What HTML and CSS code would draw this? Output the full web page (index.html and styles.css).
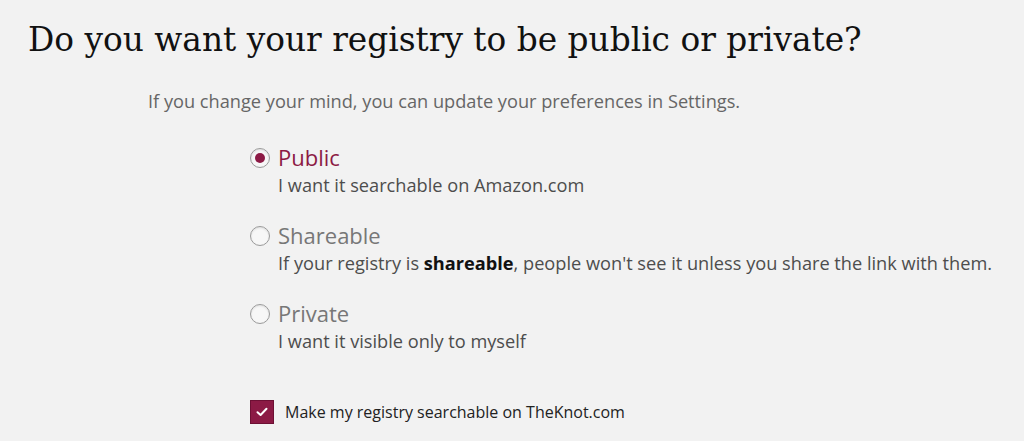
FILE: index.html
```html
<!DOCTYPE html>
<html lang="en">
<head>
    <meta charset="UTF-8">
    <title>Registry privacy</title>
    <link rel="stylesheet" href="styles.css">
</head>
<body>
    <div class="page">
        <h1 class="title">Do you want your registry to be public or private?</h1>
        <p class="subtitle">If you change your mind, you can update your preferences in Settings.</p>

        <div class="options">
            <label class="option selected">
                <span class="radio"></span>
                <span class="option-text">
                    <span class="option-label">Public</span>
                    <span class="option-desc">I want it searchable on Amazon.com</span>
                </span>
            </label>
            <label class="option">
                <span class="radio"></span>
                <span class="option-text">
                    <span class="option-label">Shareable</span>
                    <span class="option-desc">If your registry is <b>shareable</b>, people won't see it unless you share the link with them.</span>
                </span>
            </label>
            <label class="option">
                <span class="radio"></span>
                <span class="option-text">
                    <span class="option-label">Private</span>
                    <span class="option-desc">I want it visible only to myself</span>
                </span>
            </label>

            <label class="check">
                <span class="checkbox">
                    <svg width="14" height="14" viewBox="0 0 14 14"><path d="M2.5 7.2 L5.6 10 L11.5 3.8" fill="none" stroke="#fff" stroke-width="2" stroke-linecap="round" stroke-linejoin="round"/></svg>
                </span>
                <span class="check-label">Make my registry searchable on TheKnot.com</span>
            </label>
        </div>
    </div>
</body>
</html>
```

FILE: styles.css
```css
body {
    margin: 0;
    background-color: #f2f2f2;
    font-family: 'Open Sans', sans-serif;
    color: #333;
}
.page {
    padding: 14px 0 0 28px;
}
.title {
    margin: 0;
    font-family: 'DejaVu Serif', serif;
    font-weight: normal;
    font-size: 32.8px;
    line-height: 52px;
    color: #111;
}
.subtitle {
    margin: 23px 0 0 120px;
    font-size: 18.2px;
    line-height: 24px;
    color: #666;
}
.options {
    margin: 30px 0 0 222px;
    display: flex;
    flex-direction: column;
}
.option {
    display: flex;
    gap: 8px;
    margin-bottom: 22px;
}
.radio {
    flex: none;
    width: 20px;
    height: 20px;
    margin-top: 5px;
    border: 1px solid #9a9a9a;
    border-radius: 50%;
    background: #f7f7f7;
    box-sizing: border-box;
    display: flex;
    align-items: center;
    justify-content: center;
    box-shadow: inset 0 1px 2px rgba(0,0,0,0.1);
}
.option.selected .radio::after {
    content: "";
    width: 10px;
    height: 10px;
    border-radius: 50%;
    background: #8c1a45;
}
.option-text {
    display: flex;
    flex-direction: column;
}
.option-label {
    font-size: 22px;
    line-height: 28px;
    color: #777;
}
.option.selected .option-label {
    color: #8c1a45;
}
.option-desc {
    font-size: 18.2px;
    line-height: 28px;
    color: #4d4d4d;
}
.option-desc b {
    color: #111;
}
.check {
    display: flex;
    align-items: center;
    gap: 11px;
    margin-top: 23px;
}
.checkbox {
    flex: none;
    width: 24px;
    height: 24px;
    background: #8c1a45;
    border: 1px solid #6d1034;
    box-sizing: border-box;
    display: flex;
    align-items: center;
    justify-content: center;
}
.check-label {
    font-size: 16px;
    color: #222;
}
```
